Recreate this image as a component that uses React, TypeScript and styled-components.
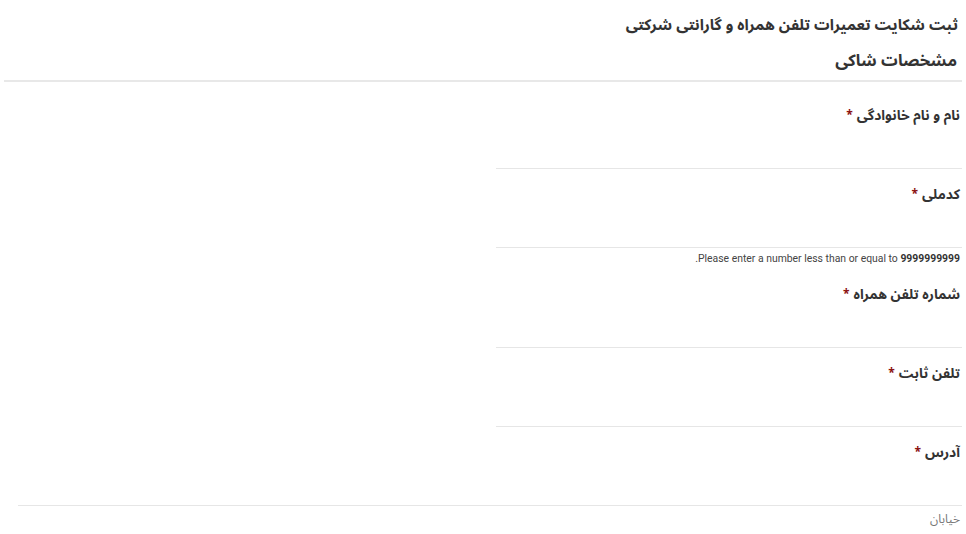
import React from "react";
import styled, { createGlobalStyle } from "styled-components";

const GlobalStyle = createGlobalStyle`
  html, body {
    margin: 0;
    padding: 0;
    background: #ffffff;
  }
  body {
    font-family: "Noto Sans Arabic", "DejaVu Sans", "Noto Sans", sans-serif;
    color: #333333;
  }
`;

const Page = styled.div`
  direction: rtl;
  width: 966px;
  padding: 0 4px;
  box-sizing: border-box;
`;

const Title = styled.h1`
  margin: 0;
  padding: 14px 4px 0 0;
  height: 22px;
  font-size: 15.4px;
  line-height: 22px;
  font-weight: bold;
  color: #333333;
`;

const SubTitle = styled.h2`
  margin: 0;
  padding: 14px 5px 8px 0;
  height: 22px;
  font-size: 16.5px;
  line-height: 22px;
  font-weight: bold;
  color: #333333;
  border-bottom: 2px solid #e8e8e8;
`;

const Form = styled.form`
  padding-top: 8px;
  display: flex;
  flex-direction: column;
  align-items: flex-start;
`;

const Field = styled.div<{ $full?: boolean }>`
  width: ${(p) => (p.$full ? "944px" : "466px")};
  padding-top: 16px;
`;

const Label = styled.label`
  display: flex;
  align-items: center;
  gap: 4px;
  height: 20px;
  padding-right: 2px;
  font-size: 13.8px;
  line-height: 20px;
  font-weight: bold;
  color: #333333;
`;

const Required = styled.span`
  color: #8b1111;
  font-size: 12px;
  line-height: 20px;
`;

const Input = styled.input`
  display: block;
  width: 100%;
  height: 43px;
  box-sizing: border-box;
  border: none;
  border-bottom: 1px solid #e6e6e6;
  background: transparent;
  outline: none;
  font-family: inherit;
  font-size: 13px;
  padding: 0 2px;
`;

const ErrorText = styled.div`
  margin-top: 3px;
  margin-bottom: 2px;
  padding-right: 2px;
  height: 16px;
  font-family: Roboto, "Liberation Sans", sans-serif;
  font-size: 10.4px;
  line-height: 16px;
  color: #444444;
  b {
    color: #333333;
  }
`;

const Hint = styled.div`
  margin-top: 6px;
  padding-right: 2px;
  height: 16px;
  font-size: 12px;
  line-height: 16px;
  color: #777777;
`;

const fields = [
  { label: "نام و نام خانوادگی" },
  { label: "کدملی", error: true },
  { label: "شماره تلفن همراه" },
  { label: "تلفن ثابت" },
];

export default function App() {
  return (
    <>
      <GlobalStyle />
      <Page>
        <Title>ثبت شکایت تعمیرات تلفن همراه و گارانتی شرکتی</Title>
        <SubTitle>مشخصات شاکی</SubTitle>
        <Form>
          {fields.map((f) => (
            <Field key={f.label}>
              <Label>
                {f.label}
                <Required>*</Required>
              </Label>
              <Input type="text" />
              {f.error && (
                <ErrorText>
                  Please enter a number less than or equal to <b>9999999999</b>.
                </ErrorText>
              )}
            </Field>
          ))}
          <Field $full>
            <Label>
              آدرس
              <Required>*</Required>
            </Label>
            <Input type="text" />
            <Hint>خیابان</Hint>
          </Field>
        </Form>
      </Page>
    </>
  );
}
